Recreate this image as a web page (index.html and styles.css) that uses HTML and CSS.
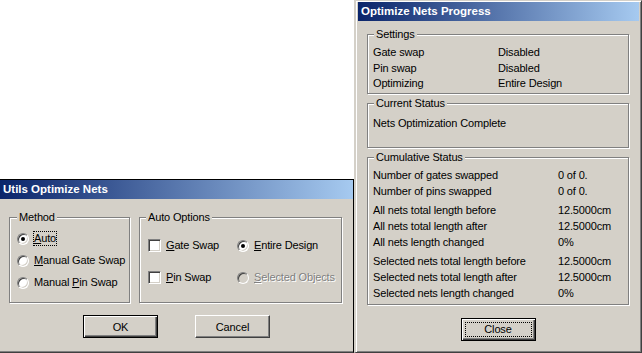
FILE: index.html
```html
<!DOCTYPE html>
<html lang="en">
<head>
    <meta charset="UTF-8">
    <title>Optimize Nets</title>
    <link rel="stylesheet" href="styles.css">
</head>
<body>

<div class="desk">
    <div class="win utils">
        <div class="caption">Utils Optimize Nets</div>
        <div class="utils-body">
            <div class="groups">
                <fieldset class="group method">
                    <legend>Method</legend>
                    <label class="opt"><span class="radio on"></span><span class="focus"><u>A</u>uto</span></label>
                    <label class="opt"><span class="radio"></span><span><u>M</u>anual Gate Swap</span></label>
                    <label class="opt"><span class="radio"></span><span>Manual <u>P</u>in Swap</span></label>
                </fieldset>
                <fieldset class="group auto">
                    <legend>Auto Options</legend>
                    <label class="opt"><span class="check"></span><span><u>G</u>ate Swap</span></label>
                    <label class="opt"><span class="radio on"></span><span><u>E</u>ntire Design</span></label>
                    <label class="opt"><span class="check"></span><span><u>P</u>in Swap</span></label>
                    <label class="opt disabled"><span class="radio"></span><span><u>S</u>elected Objects</span></label>
                </fieldset>
            </div>
            <div class="buttons">
                <span class="btn default">OK</span>
                <span class="btn">Cancel</span>
            </div>
        </div>
    </div>

    <div class="win progress">
        <div class="caption">Optimize Nets Progress</div>
        <div class="progress-body">
            <fieldset class="group settings">
                <legend>Settings</legend>
                <div class="row"><span>Gate swap</span><span>Disabled</span></div>
                <div class="row"><span>Pin swap</span><span>Disabled</span></div>
                <div class="row"><span>Optimizing</span><span>Entire Design</span></div>
            </fieldset>
            <fieldset class="group status">
                <legend>Current Status</legend>
                <div class="row">Nets Optimization Complete</div>
            </fieldset>
            <fieldset class="group cumulative">
                <legend>Cumulative Status</legend>
                <div class="block">
                    <div class="row"><span>Number of gates swapped</span><span>0 of 0.</span></div>
                    <div class="row"><span>Number of pins swapped</span><span>0 of 0.</span></div>
                </div>
                <div class="block">
                    <div class="row"><span>All nets total length before</span><span>12.5000cm</span></div>
                    <div class="row"><span>All nets total length after</span><span>12.5000cm</span></div>
                    <div class="row"><span>All nets length changed</span><span>0%</span></div>
                </div>
                <div class="block">
                    <div class="row"><span>Selected nets total length before</span><span>12.5000cm</span></div>
                    <div class="row"><span>Selected nets total length after</span><span>12.5000cm</span></div>
                    <div class="row"><span>Selected nets length changed</span><span>0%</span></div>
                </div>
            </fieldset>
            <div class="buttons">
                <span class="btn default"><span class="dots">Close</span></span>
            </div>
        </div>
    </div>
</div>

</body>
</html>
```

FILE: styles.css
```css
body {
    background: #fff;
    margin: 0;
    padding: 0;
    font-family: "Liberation Sans", Arial, sans-serif;
    font-size: 11px;
    letter-spacing: -0.15px;
    color: #000;
}
.desk {
    display: flex;
    align-items: flex-end;
    height: 353px;
    overflow: hidden;
}
.win {
    background: #d4d0c8;
    box-sizing: border-box;
    display: flex;
    flex-direction: column;
}
.utils {
    width: 354px;
    height: 174px;
    border-top: 1px solid #000;
    border-right: 1px solid #000;
    border-bottom: 1px solid #404040;
    box-shadow: inset 0 -1px #808080;
}
.progress {
    width: 288px;
    height: 353px;
    border: 1px solid;
    border-left-width: 2px;
    border-color: #d4d0c8 #404040 #404040 #d4d0c8;
    box-shadow: inset 1px 1px #fff, inset -1px -1px #808080;
    padding: 1px 2px 2px 2px;
}
.caption {
    background: linear-gradient(to right, #0a246a, #a6caf0);
    color: #fff;
    font-weight: bold;
    font-size: 11.5px;
    letter-spacing: 0;
    height: 19px;
    line-height: 19px;
    padding-left: 3px;
    flex: none;
}
.group {
    margin: 0;
    border: 1px solid #808080;
    box-shadow: 1px 1px 0 #fff, inset 1px 1px 0 #fff;
    box-sizing: border-box;
}
.group legend {
    background: #d4d0c8;
    line-height: 13px;
    padding: 0 2px;
}
.utils-body {
    padding: 12px 0 0 9px;
}
.groups {
    display: flex;
    gap: 9px;
}
.method {
    width: 121px;
    padding: 8px 0 13px 7px;
    display: flex;
    flex-direction: column;
    gap: 9px;
}
.auto {
    width: 203px;
    padding: 15px 0 18px 8px;
    display: grid;
    grid-template-columns: 89px 1fr;
    row-gap: 19px;
}
.auto legend {
    margin-left: -2px;
}
.opt {
    display: flex;
    align-items: center;
    gap: 5px;
    line-height: 13px;
    white-space: nowrap;
}
.focus {
    outline: 1px dotted #000;
}
.radio, .check {
    flex: none;
    box-sizing: border-box;
    border: 1px solid;
    border-color: #808080 #fff #fff #808080;
    box-shadow: inset 1px 1px #404040, inset -1px -1px #d4d0c8;
    background: #fff;
    display: flex;
    align-items: center;
    justify-content: center;
}
.radio {
    width: 12px;
    height: 12px;
    border-radius: 50%;
}
.check {
    width: 13px;
    height: 13px;
}
.radio.on::after {
    content: '';
    width: 4px;
    height: 4px;
    border-radius: 50%;
    background: #000;
}
.disabled {
    color: #808080;
    text-shadow: 1px 1px 0 #fff;
}
.disabled .radio {
    background: #d4d0c8;
}
.buttons {
    display: flex;
    justify-content: center;
    gap: 37px;
    margin-top: 12px;
    padding-right: 9px;
}
.btn {
    width: 75px;
    height: 23px;
    box-sizing: border-box;
    border: 1px solid;
    border-color: #fff #404040 #404040 #fff;
    box-shadow: inset -1px -1px #808080;
    display: flex;
    align-items: center;
    justify-content: center;
}
.btn.default {
    border-color: #000;
    box-shadow: inset 1px 1px #fff, inset -1px -1px #404040, inset -2px -2px #808080;
}
.dots {
    align-self: stretch;
    flex: 1;
    margin: 3px;
    border: 1px dotted #000;
    display: flex;
    align-items: center;
    justify-content: center;
}
.progress-body {
    padding: 7px 10px 0 9px;
    display: flex;
    flex-direction: column;
}
.progress-body .group {
    padding-left: 5px;
}
.progress-body legend {
    margin-left: 1px;
}
.progress-body .group + .group {
    margin-top: 3px;
}
.row {
    line-height: 16px;
    display: grid;
    grid-template-columns: 125px 1fr;
    white-space: nowrap;
}
.settings {
    padding: 4px 0 1px;
}
.settings .row {
    line-height: 15.5px;
}
.status {
    padding: 5px 0 16px;
}
.status .row {
    display: block;
}
.cumulative {
    padding: 3px 0 3px;
}
.cumulative .row {
    grid-template-columns: 185px 1fr;
}
.block + .block {
    margin-top: 3px;
}
.progress .buttons {
    margin-top: 13px;
    padding-right: 0;
}
```
